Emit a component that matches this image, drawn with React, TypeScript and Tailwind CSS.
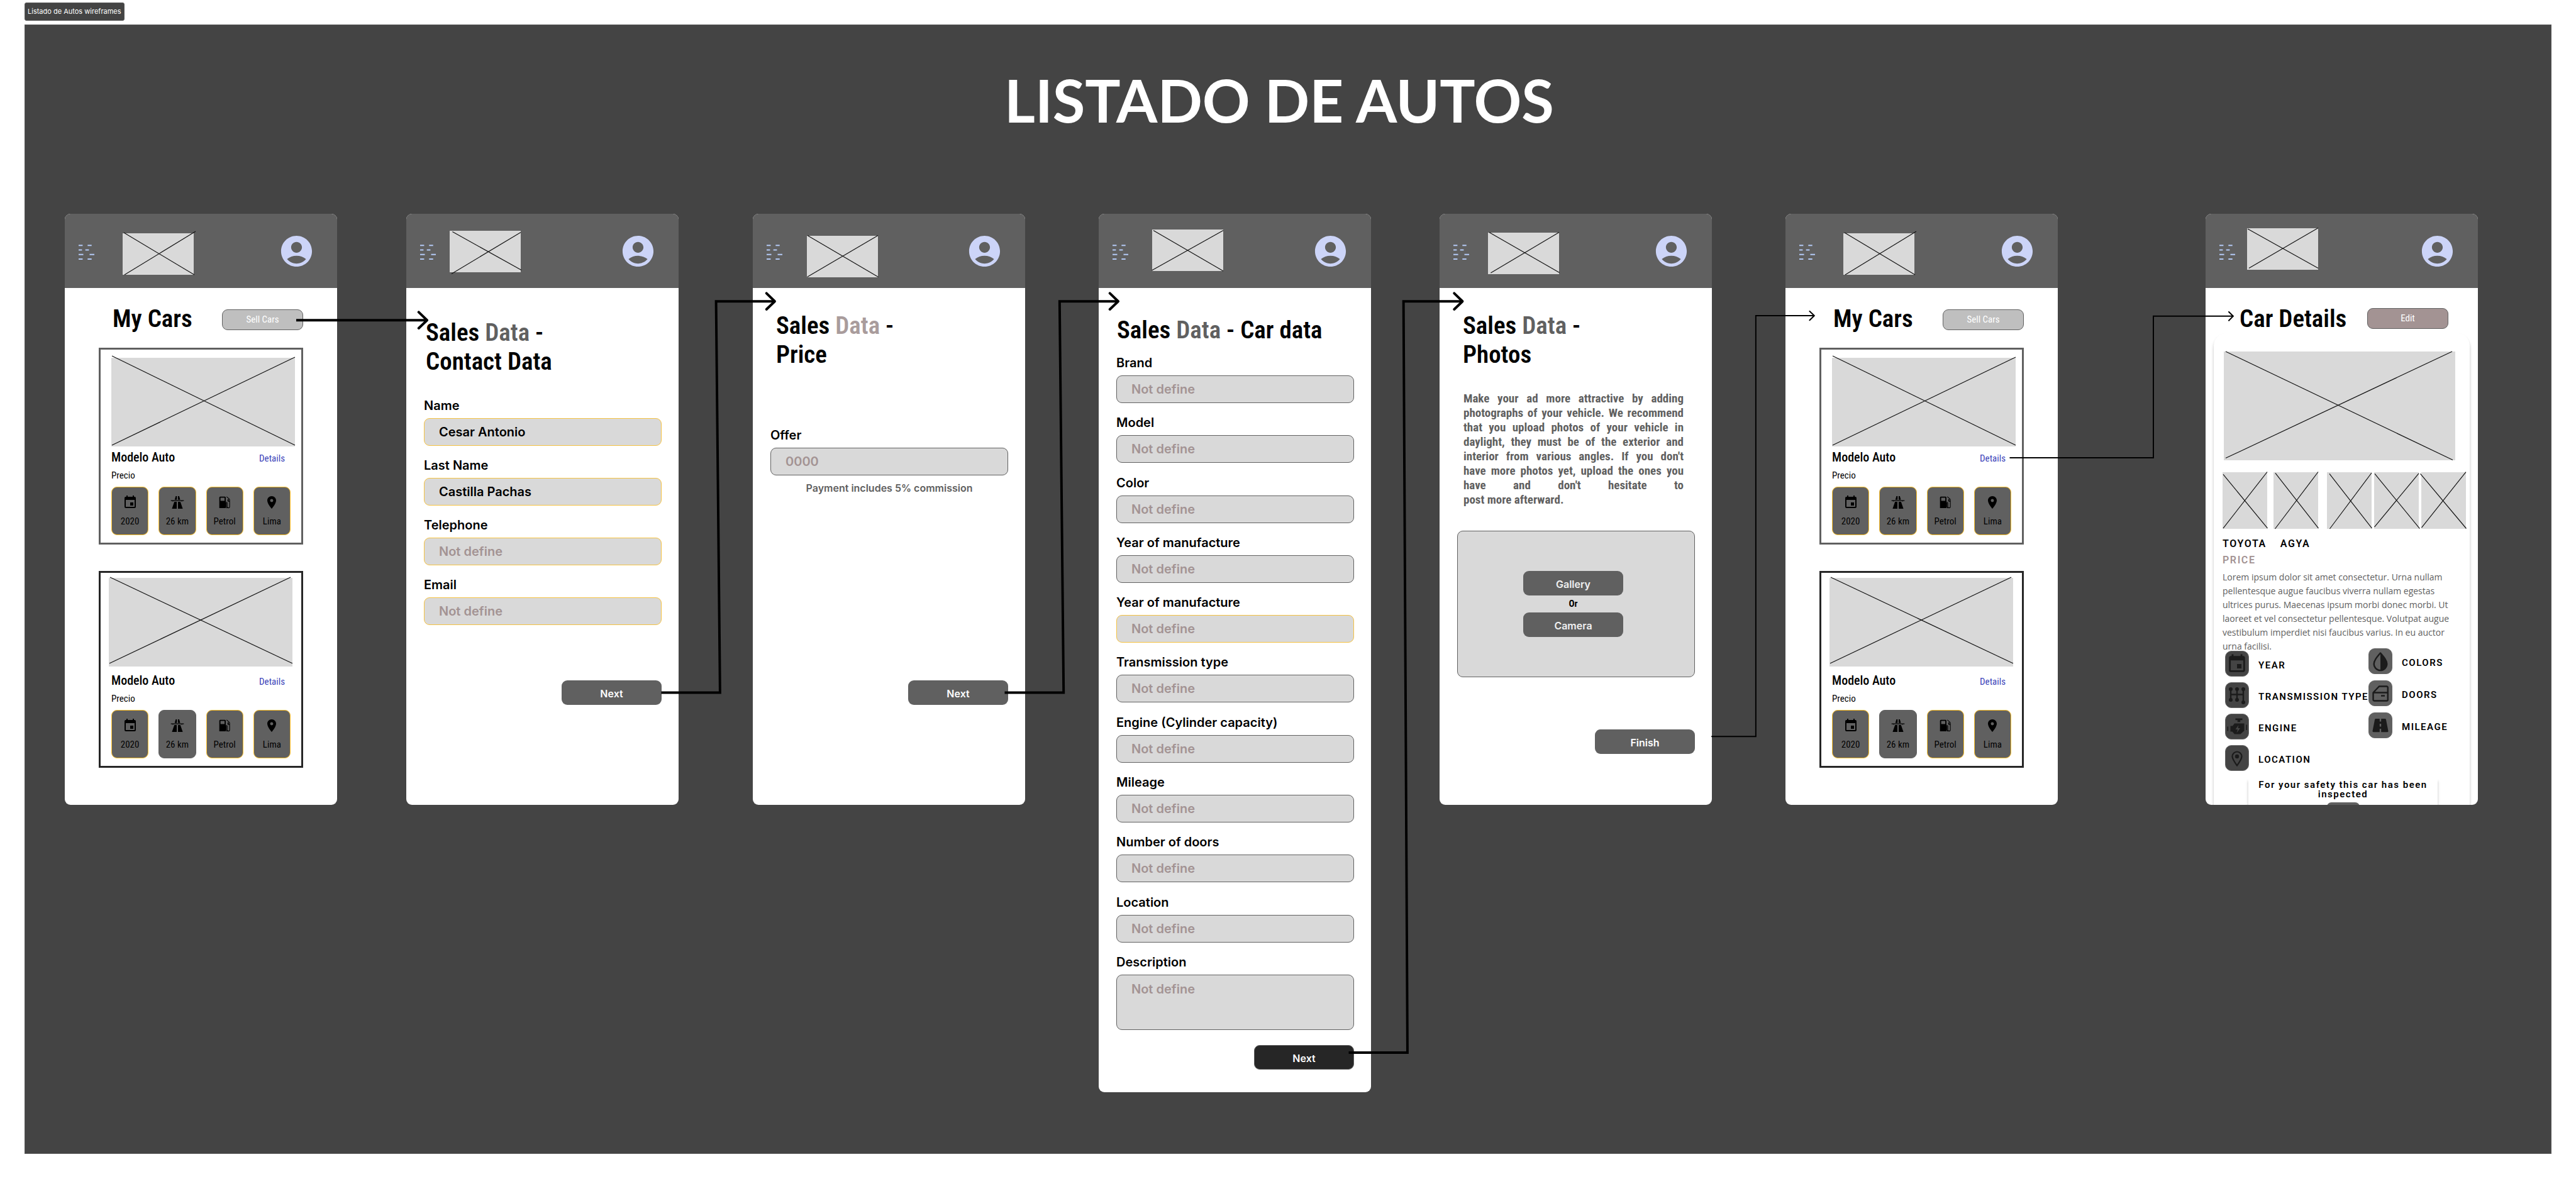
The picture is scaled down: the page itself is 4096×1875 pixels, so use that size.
import { useId, type ReactNode } from "react";
import { MdAccountCircle, MdEvent, MdLocationOn } from "react-icons/md";

type Line = [number, number, number, number];

function CrossedBox({ w, h, lines, className = "" }: { w: number; h: number; lines: Line[]; className?: string }) {
  return (
    <div className={`bg-[#d9d9d9] ${className}`}>
      <svg
        viewBox={`0 0 ${w} ${h}`}
        preserveAspectRatio="none"
        className="block h-full w-full overflow-visible"
        stroke="#111"
        strokeWidth="1.2"
        aria-hidden="true"
      >
        {lines.map(([x1, y1, x2, y2]) => (
          <line key={`${x1}-${y1}`} x1={x1} y1={y1} x2={x2} y2={y2} />
        ))}
      </svg>
    </div>
  );
}

function MenuIcon() {
  const dashes = [
    [0, 1.2, 6.4], [14.3, 1.2, 20.7],
    [0, 8.5, 5.4], [10.7, 8.5, 16.4],
    [0, 15.8, 7.5], [17.5, 15.8, 25],
    [0, 23, 6.4], [14.3, 23, 20.7],
  ];
  return (
    <svg viewBox="0 0 25 25" className="block size-[25px]" stroke="#b3c9f5" strokeWidth="2" aria-hidden="true">
      {dashes.map(([x1, y, x2]) => (
        <line key={`${x1}-${y}`} x1={x1} y1={y} x2={x2} y2={y} />
      ))}
    </svg>
  );
}

function MotorwayIcon() {
  return (
    <svg viewBox="0 0 24 24" className="size-6" fill="currentColor" aria-hidden="true">
      <path d="M9.4 2h1.9v5.8H7.8zM13 2h1.9l1.6 5.8H13zM1.7 8.6h20.6v1.1h-2.6v.9h-1.2v-.9H5.5v.9H4.3v-.9H1.7zM7.2 11H11v11H3.4zM13 11h3.8L20.6 22H13z" />
    </svg>
  );
}

function PumpIcon() {
  return (
    <svg viewBox="0 0 24 24" className="size-6" aria-hidden="true">
      <path fill="currentColor" fillRule="evenodd" d="M3.7 4.2A1.5 1.5 0 0 1 5.2 2.7h7.3A1.5 1.5 0 0 1 14 4.2V21H3.7zM5.6 4.6v5h6.5v-5z" />
      <path
        fill="none"
        stroke="currentColor"
        strokeWidth="1.1"
        d="M14 11.8h1.2q1 0 1 1v5.9a1.9 1.9 0 0 0 3.9 0V8q0-1-.7-1.7L15.3 2.9M18.4 6.6q-1.7 1.2-1.2 2.8.7 1.3 2.9.8M14 13.4h.7v5.5a3 3 0 0 0 1.5 2"
      />
      <circle cx="18.3" cy="8.4" r=".8" fill="currentColor" />
    </svg>
  );
}

function GearboxIcon() {
  return (
    <svg viewBox="0 0 32 32" className="size-8" fill="currentColor" stroke="currentColor" aria-hidden="true">
      <path d="M6 6v17M16 6v17M26 6v21M6 14.5h20" fill="none" strokeWidth="2.4" />
      <g stroke="none">
        <circle cx="6" cy="6" r="3" />
        <circle cx="16" cy="6" r="3" />
        <circle cx="26" cy="6" r="3" />
        <circle cx="6" cy="23" r="3" />
        <circle cx="16" cy="23" r="3" />
        <circle cx="26" cy="27" r="3" />
      </g>
    </svg>
  );
}

function EngineIcon() {
  return (
    <svg viewBox="0 0 32 32" className="size-8" fill="currentColor" aria-hidden="true">
      <path d="M13.5 2.5h11v2.8h-3.3v3h-4.4v-3h-3.3z" />
      <path
        fillRule="evenodd"
        d="M12 10.5h15.5v11.5l-6 5.5H12l-3.500-4H5.5v-9h3.500zM18.5 13l-5 7h3.500l-1.500 5.500 5.500-7.500h-3.500z"
      />
      <path d="M.5 15.5h1.600v7H.5zM30.500 12.500h1.600v8.500h-1.600z" />
    </svg>
  );
}

function PinIcon() {
  return (
    <svg viewBox="0 0 32 32" className="size-8" aria-hidden="true">
      <path fill="none" stroke="currentColor" strokeWidth="2.2" strokeLinejoin="round" d="M16 27.5c-4.5-6.2-7.5-10.6-7.5-14.5a7.5 7.5 0 0 1 15 0c0 3.9-3 8.3-7.5 14.5z" />
      <circle cx="16" cy="13" r="3.2" fill="currentColor" />
    </svg>
  );
}

function DropIcon() {
  return (
    <svg viewBox="0 0 32 32" className="size-8" aria-hidden="true">
      <path fill="none" stroke="currentColor" strokeWidth="2.4" strokeLinejoin="round" d="M16 2.5C10 9.5 5.7 14.5 5.7 19.8a10.3 10.3 0 0 0 20.6 0C26.3 14.5 22 9.5 16 2.5z" />
      <path fill="currentColor" d="M16 2.5v27.6a10.3 10.3 0 0 0 10.3-10.3C26.3 14.5 22 9.5 16 2.5z" />
    </svg>
  );
}

function DoorIcon() {
  return (
    <svg viewBox="0 0 32 32" className="size-8" fill="none" stroke="currentColor" strokeWidth="2.4" aria-hidden="true">
      <path strokeLinejoin="round" d="M4.5 14.5 14 4.5h12a1.8 1.8 0 0 1 1.8 1.8v19.4a1.8 1.8 0 0 1-1.8 1.8H6.3a1.8 1.8 0 0 1-1.8-1.8zM4.5 14.5h23.3" />
      <path d="M17 19.5h6" />
    </svg>
  );
}

function RoadIcon() {
  return (
    <svg viewBox="0 0 32 32" className="size-8" fill="currentColor" aria-hidden="true">
      <path
        fillRule="evenodd"
        d="M8.5 5h15a1.5 1.5 0 0 1 1.4 1.2L28.5 24.5a1.5 1.5 0 0 1-1.5 1.8H5a1.5 1.5 0 0 1-1.5-1.8L7.1 6.2A1.5 1.5 0 0 1 8.5 5zM14.8 5v4.5h2.4V5zM14.8 13v4.5h2.4V13zM14.8 21v5.3h2.4V21z"
      />
    </svg>
  );
}

function PhoneHeader({ logoClass, lines }: { logoClass: string; lines: Line[] }) {
  return (
    <header className="flex h-[118px] shrink-0 items-start bg-[#606060]">
      <button aria-label="Menu" className="mt-[49px] ml-[22px]">
        <MenuIcon />
      </button>
      <CrossedBox w={115} h={67} lines={lines} className={`h-[66px] w-[113px] ${logoClass}`} />
      <button aria-label="Account" className="mt-[30px] mr-[35px] ml-auto text-[#ccd4f8]">
        <MdAccountCircle className="size-[59px]" />
      </button>
    </header>
  );
}

function Phone({
  logoClass,
  lines,
  className,
  children,
}: {
  logoClass: string;
  lines: Line[];
  className: string;
  children: ReactNode;
}) {
  return (
    <section className={`flex flex-col overflow-hidden rounded-[9px] bg-white ${className}`}>
      <PhoneHeader logoClass={logoClass} lines={lines} />
      {children}
    </section>
  );
}

const title = "text-[39px] leading-[46px] font-semibold";

function SalesTitle({ dataClass, suffix, children }: { dataClass: string; suffix: string; children?: ReactNode }) {
  return (
    <h2 className={title}>
      Sales <span className={dataClass}>Data</span> -{suffix}
      {children && <span className="block">{children}</span>}
    </h2>
  );
}

function Field({
  label,
  value,
  placeholder = "Not define",
  yellow = false,
  multiline = false,
}: {
  label: string;
  value?: string;
  placeholder?: string;
  yellow?: boolean;
  multiline?: boolean;
}) {
  const id = useId();
  const border = yellow ? "border-[#f5c242]" : "border-[#606060]";
  const box = `block w-full rounded-[9px] border bg-[#d9d9d9] px-[23px] text-xl font-semibold text-black placeholder:text-[#a39393] ${border}`;
  return (
    <div>
      <label htmlFor={id} className="mb-2 block text-xl leading-6 font-semibold">
        {label}
      </label>
      {multiline ? (
        <textarea id={id} placeholder={placeholder} className={`h-[88px] resize-none pt-2.5 leading-6 ${box}`} />
      ) : (
        <input id={id} type="text" defaultValue={value} placeholder={placeholder} className={`h-[44px] ${box}`} />
      )}
    </div>
  );
}

function StepButton({ children, className = "bg-[#606060] text-white" }: { children: ReactNode; className?: string }) {
  return (
    <button className={`h-[39px] w-[159px] rounded-[9px] pt-[3px] font-['Inter',sans-serif] text-base leading-5 font-semibold ${className}`}>
      {children}
    </button>
  );
}

const facts = [
  { icon: <MdEvent className="size-6" />, text: "2020" },
  { icon: <MotorwayIcon />, text: "26 km" },
  { icon: <PumpIcon />, text: "Petrol" },
  { icon: <MdLocationOn className="size-6" />, text: "Lima" },
];

function CarCard({
  className,
  pictureClass,
  lines,
  plainTile = -1,
}: {
  className: string;
  pictureClass: string;
  lines: Line[];
  plainTile?: number;
}) {
  return (
    <article className={`border-[3px] pb-3 ${className}`}>
      <div className={`h-[159px] ${pictureClass}`}>
        <CrossedBox w={297} h={143} lines={lines} className="h-[141px]" />
      </div>
      <div className="flex items-start justify-between pr-[26px] pl-[17px]">
        <h3 className="text-xl leading-6 font-medium">Modelo Auto</h3>
        <a href="#details" className="mt-1 text-[15px] leading-5 text-[#3a3fb8]">
          Details
        </a>
      </div>
      <p className="mt-2 pl-[17px] text-[15px] leading-[18px]">Precio</p>
      <ul className="mt-[9px] grid grid-cols-4 gap-4 px-[17px]">
        {facts.map((fact, i) => (
          <li
            key={fact.text}
            className={`flex h-[77px] flex-col items-center rounded-[9px] border bg-[#606060] pt-[12px] ${i === plainTile ? "border-[#606060]" : "border-[#fcbf28]"}`}
          >
            {fact.icon}
            <span className="mt-[9px] text-[15px] leading-[18px]">{fact.text}</span>
          </li>
        ))}
      </ul>
    </article>
  );
}

function MyCars({ className }: { className: string }) {
  return (
    <Phone
      className={`min-h-[940px] ${className}`}
      logoClass="mt-[31px] ml-[45px]"
      lines={[
        [2, -1, 116, 67],
        [3, 67, 118, -3],
      ]}
    >
      <div className="flex items-start justify-between pt-[26px] pr-[54px] pl-[76px]">
        <h2 className={title}>My Cars</h2>
        <button className="mt-2 h-[33px] w-[129px] rounded-[9px] border border-[#606060] bg-[#bfbfbf] text-[15px] text-white">
          Sell Cars
        </button>
      </div>
      <div className="mt-[23px] flex flex-col gap-[42px] px-[54px]">
        <CarCard
          className="border-[#606060]"
          pictureClass="pt-[13px] pl-[17px] pr-[10px]"
          lines={[
            [1, -3, 297, 141],
            [1, 141, 297, -1],
          ]}
        />
        <CarCard
          className="border-[#262626]"
          pictureClass="pt-[8px] pl-[13px] pr-[14px]"
          plainTile={1}
          lines={[
            [2, -1, 297, 138],
            [1, 138, 294, -1],
          ]}
        />
      </div>
    </Phone>
  );
}

function Feature({ icon, label, className }: { icon: ReactNode; label: string; className: string }) {
  return (
    <li className="flex items-center gap-[15px]">
      <span className={`flex h-[41px] w-[38px] shrink-0 items-center justify-center rounded-[10px] border border-[#666] text-[#1b1b1b] ${className}`}>
        {icon}
      </span>
      <span className="pt-1 font-['Roboto',sans-serif] text-[15px] leading-5 font-semibold tracking-widest whitespace-nowrap">
        {label}
      </span>
    </li>
  );
}

const dark = "bg-[#444444]";
const light = "bg-[#606060]";

function CarDetails({ className }: { className: string }) {
  return (
    <Phone
      className={`h-[940px] ${className}`}
      logoClass="mt-[23px] ml-[19px]"
      lines={[
        [1, 1, 115, 64.5],
        [3, 64.5, 115, -0.5],
      ]}
    >
      <div className="flex items-start justify-between pt-[26px] pr-[47px] pl-[54px]">
        <h2 className={title}>Car Details</h2>
        <button className="mt-1.5 h-[33px] w-[129px] rounded-[9px] border border-[#606060] bg-[#a39393] text-[15px] text-white">
          Edit
        </button>
      </div>
      <div className="mx-[13px] flex flex-1 flex-col rounded-t-[20px] bg-white pt-[29px] shadow-[0_4px_4px_rgba(0,0,0,0.25)]">
        <CrossedBox
          w={374}
          h={176}
          className="mr-[23px] ml-4 h-[173px] shrink-0"
          lines={[
            [3, 0, 370, 175.5],
            [3, 172.5, 369, 0],
          ]}
        />
        <div className="mt-[19px] flex shrink-0 pl-3.5">
          {[
            { cls: "mr-2.5", lines: [[1, 3.5, 72.5, 90], [1, 90, 72, -0.5]] as Line[] },
            { cls: "mr-3.5", lines: [[3, 1.5, 72.5, 90], [2.5, 91, 72, -0.5]] as Line[] },
            { cls: "mr-1", lines: [[4, 2.5, 72.5, 90], [4.5, 91, 72, 1]] as Line[] },
            { cls: "mr-1", lines: [[1, 2.5, 73.5, 90.5], [0.5, 88, 72, 2]] as Line[] },
            { cls: "", lines: [[-1.5, 2.5, 72.5, 90.5], [0.5, 89, 72, -0.5]] as Line[] },
          ].map((thumb, i) => (
            <CrossedBox key={i} w={72} h={91} lines={thumb.lines} className={`h-[90px] w-[71px] ${thumb.cls}`} />
          ))}
        </div>
        <p className="mt-3.5 flex gap-[22px] pl-3.5 font-['Roboto',sans-serif] text-base leading-5 font-semibold tracking-widest">
          <span>TOYOTA</span>
          <span>AGYA</span>
        </p>
        <p className="mt-1.5 pl-3.5 font-['Roboto',sans-serif] text-base leading-5 font-semibold tracking-widest text-[#a39393]">
          PRICE
        </p>
        <p className="mt-1.5 mr-[30px] pl-3.5 font-['Open_Sans',sans-serif] text-sm leading-[22px] text-[#606060]">
          Lorem ipsum dolor sit amet consectetur. Urna nullam pellentesque augue faucibus viverra nullam egestas
          ultrices purus. Maecenas ipsum morbi donec morbi. Ut laoreet et vel consectetur pellentesque. Volutpat
          augue vestibulum imperdiet nisi faucibus varius. In eu auctor urna facilisi.
        </p>
        <div className="-mt-2 grid shrink-0 grid-cols-[227fr_162fr] items-start pl-[18px]">
          <ul className="mt-1 flex flex-col gap-[9px]">
            <Feature className={dark} icon={<MdEvent className="size-[34px]" />} label="YEAR" />
            <Feature className={dark} icon={<GearboxIcon />} label="TRANSMISSION TYPE" />
            <Feature className={dark} icon={<EngineIcon />} label="ENGINE" />
            <Feature className={dark} icon={<PinIcon />} label="LOCATION" />
          </ul>
          <ul className="flex flex-col gap-2.5">
            <Feature className={light} icon={<DropIcon />} label="COLORS" />
            <Feature className={light} icon={<DoorIcon />} label="DOORS" />
            <Feature className={light} icon={<RoadIcon />} label="MILEAGE" />
          </ul>
        </div>
        <div className="mt-3 mr-[51px] ml-[55px] shrink-0 px-2 pt-[3px] pb-10 text-center font-['Roboto',sans-serif] shadow-[0_4px_4px_rgba(0,0,0,0.25)]">
          <p className="text-[15px] leading-[15px] font-semibold tracking-widest">
            For your safety this car has been inspected
          </p>
          <button className="mt-1 h-5 w-[52px] rounded-[7px] bg-[#606060] text-[8px] leading-4 whitespace-nowrap text-white">
            REVIEW HERE
          </button>
        </div>
      </div>
    </Phone>
  );
}

function Arrows() {
  return (
    <svg
      viewBox="105 346 3900 1420"
      preserveAspectRatio="none"
      className="pointer-events-none absolute inset-0 h-full w-full"
      fill="none"
      stroke="#000"
      aria-hidden="true"
    >
      <g strokeWidth="4">
        <path d="M479 518H690M1069 1120H1164L1157.6 487.5H1252M1624 1120H1719.3L1712.8 487.5H1807M2180 1702H2275L2268.6 487.5H2364" />
        <g strokeLinecap="round" strokeLinejoin="round">
          <path d="M677 505L690.5 518L677 531" />
          <path d="M1239 474.5L1252.5 487.5L1239 500.5" />
          <path d="M1794 474.5L1807.5 487.5L1794 500.5" />
          <path d="M2350.5 474.5L2364 487.5L2350.5 500.5" />
        </g>
      </g>
      <g strokeWidth="2" strokeLinecap="round">
        <path d="M2767 1191H2838V510.6H2932M2925 503.5L2932.5 510.6L2925 518" />
        <path d="M3249 740.4H3480.5V511.5H3609M3602.5 504.5L3609.5 511.5L3602.5 518.5" />
      </g>
    </svg>
  );
}

const carFields = [
  "Brand",
  "Model",
  "Color",
  "Year of manufacture",
  "Year of manufacture",
  "Transmission type",
  "Engine (Cylinder capacity)",
  "Mileage",
  "Number of doors",
  "Location",
];

export default function App() {
  return (
    <main className="min-h-screen bg-white px-[39px] pt-1 pb-10 font-['Roboto_Condensed','Roboto',sans-serif] text-black">
      <p className="flex h-[29px] w-fit items-center rounded-[3px] border border-[#5a5a5a] bg-[#444444] px-1 font-['Inter',sans-serif] text-[11px] text-white">
        Listado de Autos wireframes
      </p>
      <div className="mt-1.5 border border-[#555] bg-[#444444] pt-[59px] pr-[116px] pb-[97px] pl-[63px]">
        <h1 className="pl-[25px] text-center font-['Lato',sans-serif] text-[94px] leading-[120px] font-bold text-white">
          LISTADO DE AUTOS
        </h1>
        <div className="relative mt-[121px] grid grid-cols-[433fr_110fr_433fr_118fr_433fr_117fr_433fr_109fr_433fr_117fr_433fr_235fr_433fr] items-start">
          <MyCars className="col-start-1" />

          <Phone
            className="col-start-3 min-h-[940px]"
            logoClass="mt-[27px] ml-[22px]"
            lines={[
              [4.5, 1.5, 116, 63.5],
              [3, 69.5, 115, 2.5],
            ]}
          >
            <div className="pt-[48px] pl-[31px]">
              <SalesTitle dataClass="text-[#606060]" suffix="">
                Contact Data
              </SalesTitle>
            </div>
            <form className="mt-[35px] flex flex-col gap-[19px] pr-[27px] pl-7 font-['Inter',sans-serif]">
              <Field label="Name" value="Cesar Antonio" yellow />
              <Field label="Last Name" value="Castilla Pachas" yellow />
              <Field label="Telephone" yellow />
              <Field label="Email" yellow />
            </form>
            <div className="mt-auto mb-[159px] flex justify-end pr-[27px]">
              <StepButton>Next</StepButton>
            </div>
          </Phone>

          <Phone
            className="col-start-5 min-h-[940px]"
            logoClass="mt-[35px] ml-[39px]"
            lines={[
              [1, -0.5, 115.5, 66.5],
              [0.5, 66.5, 115, -0.5],
            ]}
          >
            <div className="pt-[37px] pl-[37px]">
              <SalesTitle dataClass="text-[#a99c9c]" suffix="">
                Price
              </SalesTitle>
            </div>
            <form className="mt-[93px] pr-[27px] pl-7 font-['Inter',sans-serif]">
              <Field label="Offer" placeholder="0000" />
              <p className="mt-2.5 text-center text-base leading-5 font-semibold text-[#606060]">
                Payment includes 5% commission
              </p>
            </form>
            <div className="mt-auto mb-[159px] flex justify-end pr-[27px]">
              <StepButton>Next</StepButton>
            </div>
          </Phone>

          <Phone
            className="col-start-7 min-h-[1397px]"
            logoClass="mt-[25px] ml-[38px]"
            lines={[
              [2, 1.5, 115, 67],
              [-0.5, 66, 115, 1.5],
            ]}
          >
            <div className="pt-[44px] pl-[29px]">
              <SalesTitle dataClass="text-[#606060]" suffix=" Car data" />
            </div>
            <form className="mt-[17px] mb-[24px] flex flex-1 flex-col justify-between pr-[27px] pl-7 font-['Inter',sans-serif]">
              {carFields.map((label, i) => (
                <Field key={i} label={label} yellow={i === 4} />
              ))}
              <Field label="Description" multiline />
            </form>
            <div className="mb-[36px] flex justify-end pr-[27px]">
              <StepButton className="border border-[#606060] bg-[#262626] text-white">Next</StepButton>
            </div>
          </Phone>

          <Phone
            className="col-start-9 min-h-[940px]"
            logoClass="mt-[30px] ml-[30px]"
            lines={[
              [2, -0.5, 115.5, 64.5],
              [4.5, 65, 115, -0.5],
            ]}
          >
            <div className="pt-[37px] pl-[37px]">
              <SalesTitle dataClass="text-[#606060]" suffix="">
                Photos
              </SalesTitle>
            </div>
            <p className="mt-[35px] mr-[45px] ml-[38px] text-justify text-[19px] leading-[23px] font-bold text-[#606060]">
              Make your ad more attractive by adding photographs of your vehicle. We recommend that you upload photos
              of your vehicle in daylight, they must be of the exterior and interior from various angles. If you don't{" "}
              {"have\u00a0more"} photos yet, upload the ones you have and don't hesitate to{" "}
              {"post\u00a0more\u00a0afterward."}
            </p>
            <div className="mt-[38px] mr-[27px] ml-7 flex h-[233px] flex-col items-center justify-center rounded-[9px] border border-[#606060] bg-[#d9d9d9] pr-[9px]">
              <StepButton className="bg-[#606060] text-[#f0f0f0]">Gallery</StepButton>
              <span className="py-1 text-[15px] leading-[19px] font-bold">Or</span>
              <StepButton className="bg-[#606060] text-[#f0f0f0]">Camera</StepButton>
            </div>
            <div className="mt-auto mb-[81px] flex justify-end pr-[27px]">
              <StepButton>Finish</StepButton>
            </div>
          </Phone>

          <MyCars className="col-start-11" />

          <CarDetails className="col-start-13" />

          <Arrows />
        </div>
      </div>
    </main>
  );
}
